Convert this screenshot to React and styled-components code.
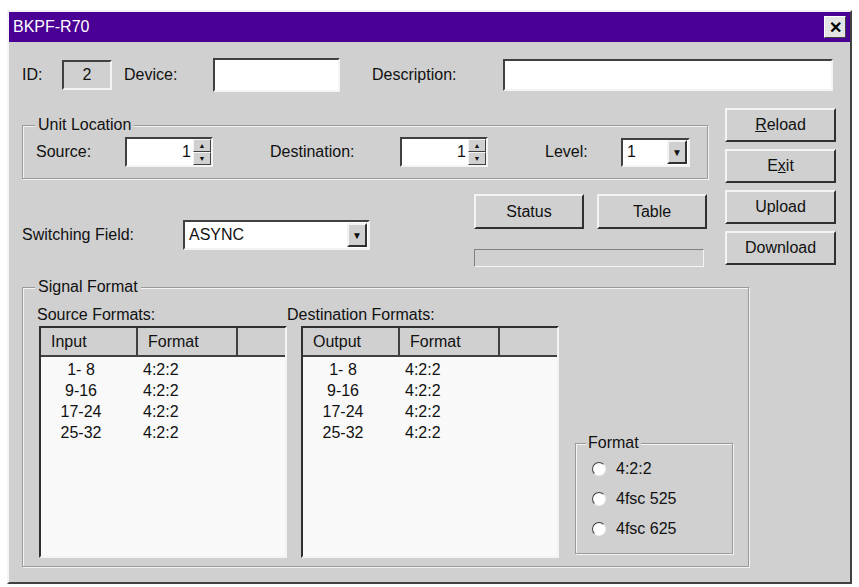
import React from 'react'
import styled, { createGlobalStyle } from 'styled-components'

const Global = createGlobalStyle`
  html, body { margin: 0; background: #ffffff; }
  body { font-family: "Liberation Sans", Arial, sans-serif; font-size: 16px; color: #111; }
`

const Window = styled.div`
  margin: 10px 0 0 7px;
  width: 845px;
  height: 574px;
  box-sizing: border-box;
  background: #d0d0d0;
  border: 2px solid;
  border-color: #f4f4f4 #404040 #404040 #f4f4f4;
  display: flex;
  flex-direction: column;
`
const TitleBar = styled.div`
  height: 30px;
  background: #4a0094;
  color: #fff;
  display: flex;
  align-items: center;
  justify-content: space-between;
  padding: 0 4px;
  font-size: 16px;
`
const CloseBtn = styled.div`
  width: 20px;
  height: 20px;
  background: #e4e4e4;
  color: #000;
  font-weight: bold;
  font-size: 16px;
  display: flex;
  align-items: center;
  justify-content: center;
  border: 1px solid;
  border-color: #fff #404040 #404040 #fff;
`
const Body = styled.div`
  flex: 1;
  padding: 16px 0 0 13px;
  display: flex;
  flex-direction: column;
`
const Row = styled.div`
  display: flex;
  align-items: center;
  gap: ${(p) => p.gap || 0}px;
`
const Label = styled.span`
  margin: ${(p) => p.m || '0'};
  width: ${(p) => (p.w ? `${p.w}px` : 'auto')};
  flex-shrink: 0;
  white-space: nowrap;
`
const Sunken = styled.div`
  width: ${(p) => p.w}px;
  height: ${(p) => p.h || 30}px;
  box-sizing: border-box;
  flex-shrink: 0;
  background: ${(p) => (p.gray ? '#d0d0d0' : '#fff')};
  border: 2px solid;
  border-color: #404040 #f4f4f4 #f4f4f4 #404040;
  margin: ${(p) => p.m || '0'};
  display: flex;
  align-items: center;
  justify-content: ${(p) => p.justify || 'flex-start'};
  padding: 0 4px;
  font-size: 16px;
`
const Group = styled.div`
  position: relative;
  border: 1px solid #9a9a9a;
  box-shadow: inset 1px 1px 0 #f4f4f4, 1px 1px 0 #f4f4f4;
  width: ${(p) => p.w}px;
  height: ${(p) => p.h}px;
  box-sizing: border-box;
  flex-shrink: 0;
  margin: ${(p) => p.m || '0'};
`
const Legend = styled.span`
  position: absolute;
  top: -10px;
  left: 12px;
  padding: 0 3px;
  background: #d0d0d0;
  font-size: 16px;
  line-height: 18px;
`
const Mid = styled.div`
  display: flex;
`
const LeftCol = styled.div`
  width: 686px;
  display: flex;
  flex-direction: column;
`
const RightCol = styled.div`
  margin: 16px 0 0 17px;
  display: flex;
  flex-direction: column;
  gap: 7px;
`
const Button = styled.div`
  width: ${(p) => p.w || 111}px;
  height: ${(p) => p.h || 34}px;
  box-sizing: border-box;
  background: #d0d0d0;
  border: 2px solid;
  border-color: #f4f4f4 #303030 #303030 #f4f4f4;
  display: flex;
  align-items: center;
  justify-content: center;
  font-size: 16px;
  u { text-decoration: underline; }
`
const SpinBox = styled.div`
  display: flex;
  align-items: center;
  justify-content: flex-end;
  width: 88px;
  height: 30px;
  box-sizing: border-box;
  flex-shrink: 0;
  background: #fff;
  border: 2px solid;
  border-color: #404040 #f4f4f4 #f4f4f4 #404040;
  font-size: 16px;
  gap: 2px;
`
const SpinArrows = styled.div`
  width: 18px;
  height: 26px;
  display: flex;
  flex-direction: column;
  background: #d0d0d0;
  div {
    flex: 1;
    display: flex;
    align-items: center;
    justify-content: center;
    font-size: 7px;
    border: 1px solid;
    border-color: #f4f4f4 #404040 #404040 #f4f4f4;
  }
`
const DropBtn = styled.div`
  width: 20px;
  height: 24px;
  margin-left: auto;
  margin-right: -3px;
  background: #d0d0d0;
  border: 2px solid;
  border-color: #f4f4f4 #303030 #303030 #f4f4f4;
  box-sizing: border-box;
  display: flex;
  align-items: center;
  justify-content: center;
  font-size: 10px;
`
const Lower = styled.div`
  display: flex;
  margin-top: 15px;
`
const StatusArea = styled.div`
  margin-left: 104px;
  display: flex;
  flex-direction: column;
  gap: 20px;
`
const Progress = styled.div`
  width: 230px;
  height: 18px;
  box-sizing: border-box;
  border: 1px solid;
  border-color: #808080 #f4f4f4 #f4f4f4 #808080;
`
const SignalInner = styled.div`
  display: flex;
  padding: 18px 0 0 14px;
`
const ListCol = styled.div`
  display: flex;
  flex-direction: column;
`
const ListBox = styled.div`
  margin: 2px 0 0 ${(p) => p.indent || 0}px;
  width: ${(p) => p.w}px;
  height: 232px;
  box-sizing: border-box;
  background: #f9f9f9;
  border: 2px solid;
  border-color: #303030 #f4f4f4 #f4f4f4 #303030;
`
const Header = styled.div`
  display: flex;
  height: 27px;
  border-bottom: 2px solid #404040;
`
const HCell = styled.div`
  width: ${(p) => p.w}px;
  box-sizing: border-box;
  background: #d0d0d0;
  border-right: ${(p) => (p.last ? 'none' : '2px solid #404040')};
  padding-left: 10px;
  display: flex;
  align-items: center;
  font-size: 16px;
`
const DataRow = styled.div`
  display: flex;
  font-size: 16px;
  line-height: 21px;
  span:first-child { width: 80px; text-align: center; }
  span:last-child { margin-left: 22px; }
`
const Radio = styled.div`
  display: flex;
  align-items: center;
  gap: 10px;
  font-size: 16px;
  height: 30px;
`
const RadioDot = styled.span`
  width: 12px;
  height: 12px;
  border-radius: 50%;
  background: #fff;
  border: 1px solid;
  border-color: #404040 #eee #eee #404040;
`
const FormatOpts = styled.div`
  padding: 10px 0 0 16px;
`

const rows = [['1- 8', '4:2:2'], ['9-16', '4:2:2'], ['17-24', '4:2:2'], ['25-32', '4:2:2']]

function List({ first, indent, w }) {
  return (
    <ListBox indent={indent} w={w}>
      <Header>
        <HCell w={97}>{first}</HCell>
        <HCell w={100}>Format</HCell>
        <HCell w={w - 201} last />
      </Header>
      <div style={{ paddingTop: 2 }}>
        {rows.map((r) => (
          <DataRow key={r[0]}>
            <span>{r[0]}</span>
            <span>{r[1]}</span>
          </DataRow>
        ))}
      </div>
    </ListBox>
  )
}

function Spin() {
  return (
    <SpinBox>
      1
      <SpinArrows>
        <div>▲</div>
        <div>▼</div>
      </SpinArrows>
    </SpinBox>
  )
}

export default function App() {
  return (
    <>
      <Global />
      <Window>
        <TitleBar>
          <span>BKPF-R70</span>
          <CloseBtn>✕</CloseBtn>
        </TitleBar>
        <Body>
          <Row>
            <Label w={40}>ID:</Label>
            <Sunken w={50} gray justify="center">2</Sunken>
            <Label w={89} m="0 0 0 12px">Device:</Label>
            <Sunken w={127} h={34} />
            <Label w={131} m="0 0 0 32px">Description:</Label>
            <Sunken w={330} h={32} />
          </Row>
          <Mid>
            <LeftCol>
              <Group w={686} h={54} m="33px 0 0 0">
                <Legend>Unit Location</Legend>
                <Row style={{ height: '100%', paddingLeft: 13 }}>
                  <Label w={89}>Source:</Label>
                  <Spin />
                  <Label w={130} m="0 0 0 57px">Destination:</Label>
                  <Spin />
                  <Label w={76} m="0 0 0 57px">Level:</Label>
                  <Sunken w={69} h={29}>1<DropBtn>▼</DropBtn></Sunken>
                </Row>
              </Group>
              <Lower>
                <Row style={{ marginTop: 26, alignSelf: 'flex-start' }}>
                  <Label w={161}>Switching Field:</Label>
                  <Sunken w={187} h={30}>ASYNC<DropBtn>▼</DropBtn></Sunken>
                </Row>
                <StatusArea>
                  <Row gap={13}>
                    <Button w={110} h={35}>Status</Button>
                    <Button w={110} h={35}>Table</Button>
                  </Row>
                  <Progress />
                </StatusArea>
              </Lower>
            </LeftCol>
            <RightCol>
              <Button><span><u>R</u>eload</span></Button>
              <Button><span>E<u>x</u>it</span></Button>
              <Button>Upload</Button>
              <Button>Download</Button>
            </RightCol>
          </Mid>
          <Group w={727} h={280} m="20px 0 0 0">
            <Legend>Signal Format</Legend>
            <SignalInner>
              <ListCol>
                <Label>Source Formats:</Label>
                <List first="Input" indent={2} w={248} />
              </ListCol>
              <ListCol>
                <Label>Destination Formats:</Label>
                <List first="Output" indent={14} w={258} />
              </ListCol>
              <Group w={158} h={111} m="137px 0 0 16px">
                <Legend style={{ left: 10, padding: '0 2px' }}>Format</Legend>
                <FormatOpts>
                  <Radio><RadioDot />4:2:2</Radio>
                  <Radio><RadioDot />4fsc 525</Radio>
                  <Radio><RadioDot />4fsc 625</Radio>
                </FormatOpts>
              </Group>
            </SignalInner>
          </Group>
        </Body>
      </Window>
    </>
  )
}
